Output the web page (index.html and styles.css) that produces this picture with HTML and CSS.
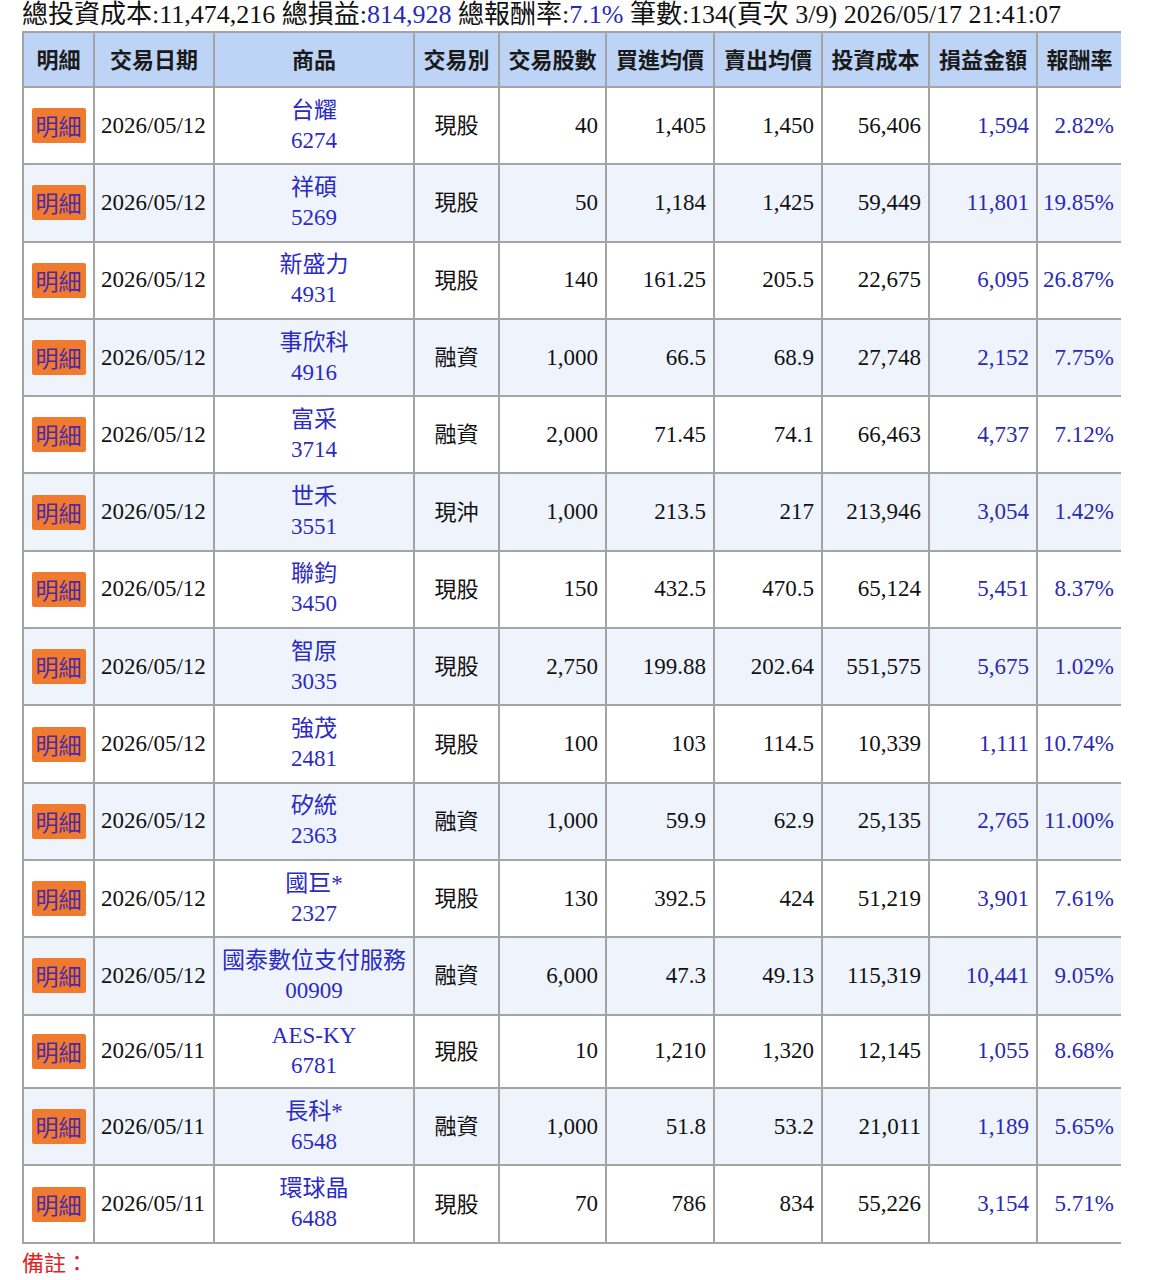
FILE: index.html
```html
<!DOCTYPE html>
<html lang="zh-Hant">
<head>
<meta charset="utf-8">
<title>交易明細</title>
<link rel="stylesheet" href="styles.css">
</head>
<body>
<div class="summary">總投資成本:11,474,216 總損益:<span class="blue">814,928</span> 總報酬率:<span class="blue">7.1%</span> 筆數:134(頁次 3/9) 2026/05/17 21:41:07</div>
<table class="trades">
<colgroup>
<col class="c-btn"><col class="c-date"><col class="c-name"><col class="c-type"><col class="c-qty"><col class="c-buy"><col class="c-sell"><col class="c-cost"><col class="c-pl"><col class="c-rate">
</colgroup>
<thead>
<tr><th>明細</th><th>交易日期</th><th>商品</th><th>交易別</th><th>交易股數</th><th>買進均價</th><th>賣出均價</th><th>投資成本</th><th>損益金額</th><th>報酬率</th></tr>
</thead>
<tbody>
<tr><td class="btn-cell"><a class="btn" href="#">明細</a></td><td class="date">2026/05/12</td><td class="name"><a href="#">台耀<br>6274</a></td><td class="type">現股</td><td class="num">40</td><td class="num">1,405</td><td class="num">1,450</td><td class="num">56,406</td><td class="num blue">1,594</td><td class="num blue">2.82%</td></tr>
<tr class="alt"><td class="btn-cell"><a class="btn" href="#">明細</a></td><td class="date">2026/05/12</td><td class="name"><a href="#">祥碩<br>5269</a></td><td class="type">現股</td><td class="num">50</td><td class="num">1,184</td><td class="num">1,425</td><td class="num">59,449</td><td class="num blue">11,801</td><td class="num blue">19.85%</td></tr>
<tr><td class="btn-cell"><a class="btn" href="#">明細</a></td><td class="date">2026/05/12</td><td class="name"><a href="#">新盛力<br>4931</a></td><td class="type">現股</td><td class="num">140</td><td class="num">161.25</td><td class="num">205.5</td><td class="num">22,675</td><td class="num blue">6,095</td><td class="num blue">26.87%</td></tr>
<tr class="alt"><td class="btn-cell"><a class="btn" href="#">明細</a></td><td class="date">2026/05/12</td><td class="name"><a href="#">事欣科<br>4916</a></td><td class="type">融資</td><td class="num">1,000</td><td class="num">66.5</td><td class="num">68.9</td><td class="num">27,748</td><td class="num blue">2,152</td><td class="num blue">7.75%</td></tr>
<tr><td class="btn-cell"><a class="btn" href="#">明細</a></td><td class="date">2026/05/12</td><td class="name"><a href="#">富采<br>3714</a></td><td class="type">融資</td><td class="num">2,000</td><td class="num">71.45</td><td class="num">74.1</td><td class="num">66,463</td><td class="num blue">4,737</td><td class="num blue">7.12%</td></tr>
<tr class="alt"><td class="btn-cell"><a class="btn" href="#">明細</a></td><td class="date">2026/05/12</td><td class="name"><a href="#">世禾<br>3551</a></td><td class="type">現沖</td><td class="num">1,000</td><td class="num">213.5</td><td class="num">217</td><td class="num">213,946</td><td class="num blue">3,054</td><td class="num blue">1.42%</td></tr>
<tr><td class="btn-cell"><a class="btn" href="#">明細</a></td><td class="date">2026/05/12</td><td class="name"><a href="#">聯鈞<br>3450</a></td><td class="type">現股</td><td class="num">150</td><td class="num">432.5</td><td class="num">470.5</td><td class="num">65,124</td><td class="num blue">5,451</td><td class="num blue">8.37%</td></tr>
<tr class="alt"><td class="btn-cell"><a class="btn" href="#">明細</a></td><td class="date">2026/05/12</td><td class="name"><a href="#">智原<br>3035</a></td><td class="type">現股</td><td class="num">2,750</td><td class="num">199.88</td><td class="num">202.64</td><td class="num">551,575</td><td class="num blue">5,675</td><td class="num blue">1.02%</td></tr>
<tr><td class="btn-cell"><a class="btn" href="#">明細</a></td><td class="date">2026/05/12</td><td class="name"><a href="#">強茂<br>2481</a></td><td class="type">現股</td><td class="num">100</td><td class="num">103</td><td class="num">114.5</td><td class="num">10,339</td><td class="num blue">1,111</td><td class="num blue">10.74%</td></tr>
<tr class="alt"><td class="btn-cell"><a class="btn" href="#">明細</a></td><td class="date">2026/05/12</td><td class="name"><a href="#">矽統<br>2363</a></td><td class="type">融資</td><td class="num">1,000</td><td class="num">59.9</td><td class="num">62.9</td><td class="num">25,135</td><td class="num blue">2,765</td><td class="num blue">11.00%</td></tr>
<tr><td class="btn-cell"><a class="btn" href="#">明細</a></td><td class="date">2026/05/12</td><td class="name"><a href="#">國巨*<br>2327</a></td><td class="type">現股</td><td class="num">130</td><td class="num">392.5</td><td class="num">424</td><td class="num">51,219</td><td class="num blue">3,901</td><td class="num blue">7.61%</td></tr>
<tr class="alt"><td class="btn-cell"><a class="btn" href="#">明細</a></td><td class="date">2026/05/12</td><td class="name"><a href="#">國泰數位支付服務<br>00909</a></td><td class="type">融資</td><td class="num">6,000</td><td class="num">47.3</td><td class="num">49.13</td><td class="num">115,319</td><td class="num blue">10,441</td><td class="num blue">9.05%</td></tr>
<tr class="short"><td class="btn-cell"><a class="btn" href="#">明細</a></td><td class="date">2026/05/11</td><td class="name"><a href="#">AES-KY<br>6781</a></td><td class="type">現股</td><td class="num">10</td><td class="num">1,210</td><td class="num">1,320</td><td class="num">12,145</td><td class="num blue">1,055</td><td class="num blue">8.68%</td></tr>
<tr class="alt"><td class="btn-cell"><a class="btn" href="#">明細</a></td><td class="date">2026/05/11</td><td class="name"><a href="#">長科*<br>6548</a></td><td class="type">融資</td><td class="num">1,000</td><td class="num">51.8</td><td class="num">53.2</td><td class="num">21,011</td><td class="num blue">1,189</td><td class="num blue">5.65%</td></tr>
<tr><td class="btn-cell"><a class="btn" href="#">明細</a></td><td class="date">2026/05/11</td><td class="name"><a href="#">環球晶<br>6488</a></td><td class="type">現股</td><td class="num">70</td><td class="num">786</td><td class="num">834</td><td class="num">55,226</td><td class="num blue">3,154</td><td class="num blue">5.71%</td></tr>
</tbody>
</table>
<div class="note">備註：</div>
</body>
</html>
```
FILE: styles.css
```css
html, body {
  margin: 0;
  padding: 0;
  background: #ffffff;
}
body {
  padding-left: 22px;
  font-family: "Liberation Serif", "Noto Sans CJK TC", serif;
  color: #111111;
}
.summary {
  font-size: 26px;
  line-height: 30px;
  height: 31px;
  white-space: nowrap;
}
.blue {
  color: #2a2ab4;
}
.trades {
  border-collapse: collapse;
  table-layout: fixed;
  width: 1098px;
  font-size: 23px;
}
.c-btn { width: 71px; }
.c-date { width: 120px; }
.c-name { width: 200px; }
.c-type { width: 85px; }
.c-qty { width: 107px; }
.c-buy { width: 108px; }
.c-sell { width: 108px; }
.c-cost { width: 107px; }
.c-pl { width: 108px; }
.c-rate { width: 84px; }
.trades th,
.trades td {
  border: 2px solid #a4a4a4;
  padding: 0;
}
.trades th:last-child,
.trades td:last-child {
  border-right: none;
}
.trades th {
  background: #bdd4f7;
  font-family: "Noto Sans CJK TC", sans-serif;
  font-weight: 700;
  font-size: 22px;
  color: #1a1a1a;
  height: 49px;
  padding-bottom: 4px;
  text-align: center;
  white-space: nowrap;
}
.trades td {
  height: 75.3px;
  line-height: 30px;
  vertical-align: middle;
}
.trades tr.short td {
  height: 71.5px;
}
.trades tr.alt td {
  background: #eff4fc;
}
.btn-cell {
  text-align: center;
}
.btn {
  display: inline-block;
  background: #f07a2e;
  color: #4a2aa6;
  font-family: "Noto Sans CJK TC", sans-serif;
  font-size: 23px;
  line-height: 27px;
  padding: 4px 4px;
  border-radius: 2px;
  text-decoration: none;
}
.date {
  padding-left: 6px !important;
  white-space: nowrap;
}
.name {
  text-align: center;
  white-space: nowrap;
}
.name a {
  color: #2b2bc4;
  text-decoration: none;
}
.trades td.type {
  text-align: center;
  font-family: "Noto Sans CJK TC", sans-serif;
  font-size: 22px;
  line-height: 26px;
  height: 70.3px;
  padding-bottom: 5px;
}
.trades tr.short td.type {
  height: 66.5px;
}
.num {
  text-align: right;
  padding-right: 7px !important;
  white-space: nowrap;
}
.note {
  color: #e02424;
  font-family: "Noto Sans CJK TC", sans-serif;
  font-size: 22px;
  line-height: 34px;
}
```
